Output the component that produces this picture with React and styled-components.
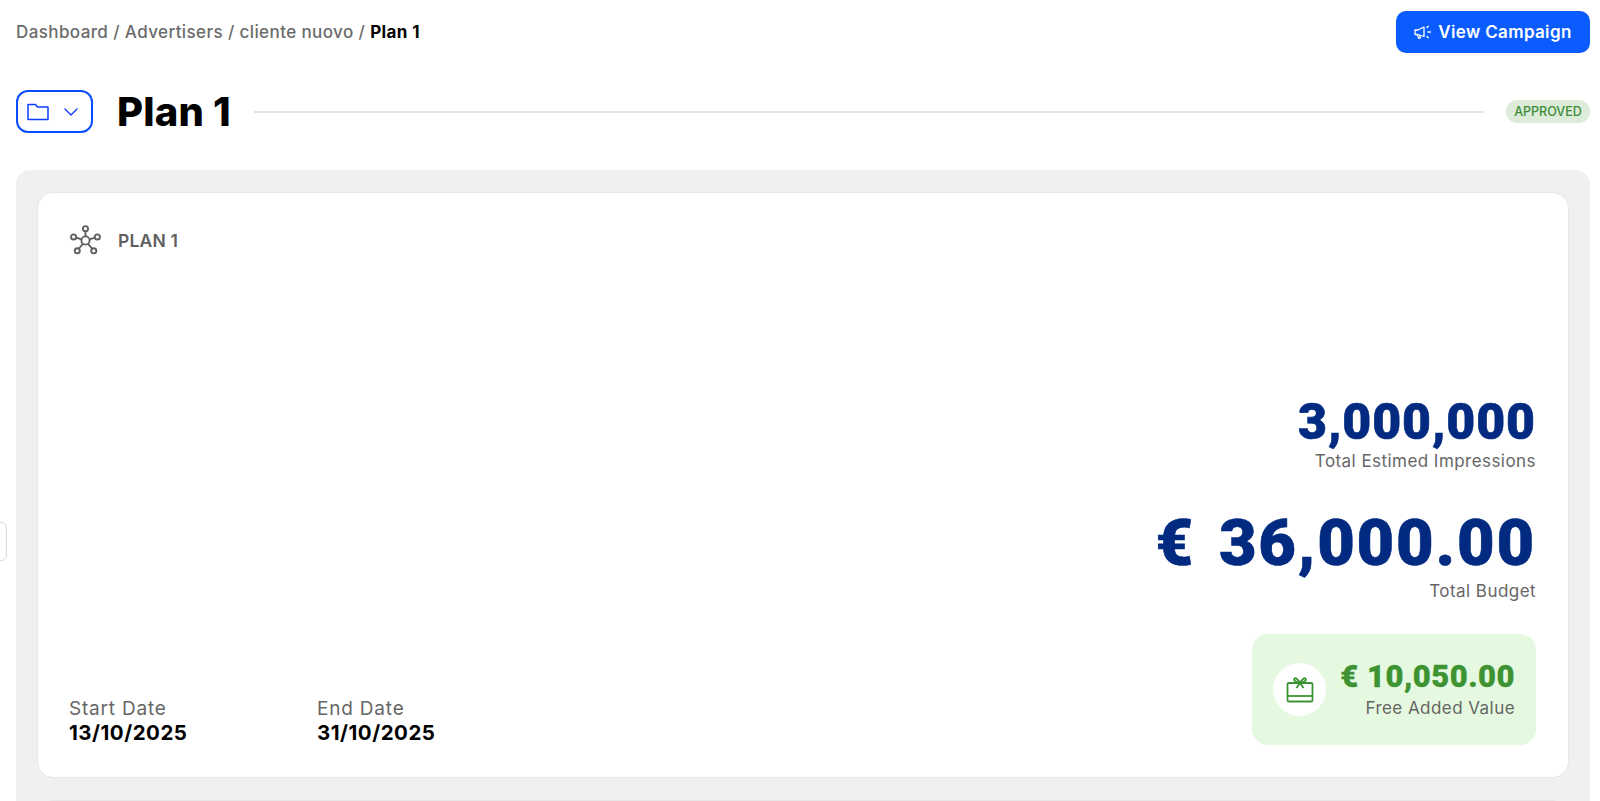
import React from "react";
import styled, { createGlobalStyle } from "styled-components";
import { ChevronDown } from "lucide-react";

const GlobalStyle = createGlobalStyle`
  html, body {
    margin: 0;
    height: 801px;
    overflow: hidden;
    background: #fff;
    font-family: "Inter", "Noto Sans", sans-serif;
  }
`;

const MegaphoneIcon = () => (
  <svg width="18" height="15" viewBox="0 0 18 15" fill="none" stroke="#fff" strokeWidth="1.3" strokeLinejoin="round" strokeLinecap="round">
    <path d="M1 5h3l6-3v9.5L4 9.5H1z" />
    <path d="M3.5 10l1 3h2l-.7-2.4" />
    <path d="M13 2.5l1.2-1.2M14 7h2.4M13 11.5l1.2 1.2" />
  </svg>
);

const FolderIcon = () => (
  <svg width="22" height="18" viewBox="0 0 22 18" fill="none" stroke="currentColor" strokeWidth="1.5" strokeLinejoin="round">
    <path d="M1 1.5h7.5l2 2.5H21v12.5H1z" />
  </svg>
);

const NetworkIcon = () => (
  <svg width="33" height="33" viewBox="0 0 32 32" fill="none" stroke="#5f5f5f" strokeWidth="1.8">
    <circle cx="16" cy="16" r="4" />
    <circle cx="16" cy="4.5" r="2.5" />
    <circle cx="4.5" cy="12.5" r="2.5" />
    <circle cx="27.5" cy="12.5" r="2.5" />
    <circle cx="8" cy="26" r="2.5" />
    <circle cx="24" cy="26" r="2.5" />
    <path d="M16 7v5M7 13.2l5.2 1.6M25 13.2l-5.2 1.6M9.5 24l4-4.8M22.5 24l-4-4.8" />
  </svg>
);

const GiftIcon = () => (
  <svg width="28" height="26" viewBox="0 0 28 26" fill="none" stroke="#3d9232" strokeWidth="1.8" strokeLinejoin="round">
    <rect x="1.5" y="6" width="25" height="18.5" rx="1.2" />
    <path d="M1.5 19h25" />
    <path d="M14 6C12 2 9.5 0.6 8.4 1.6 7.2 2.8 9.5 5.6 14 6zM14 6C16 2 18.5 0.6 19.6 1.6 20.8 2.8 18.5 5.6 14 6z" />
    <path d="M14 6l-3.5 5M14 6l3.5 5" />
  </svg>
);

const Page = styled.div`
  position: relative;
  height: 801px;
  overflow: hidden;
  padding: 11px 10px 0 16px;
  box-sizing: border-box;
`;

const TopBar = styled.header`
  display: flex;
  justify-content: space-between;
  align-items: center;
  height: 42px;
`;

const Crumbs = styled.nav`
  font-size: 17px;
  letter-spacing: 0.4px;
  color: #6b6b6b;
  font-weight: 500;
`;

const CurrentCrumb = styled.span`
  color: #000;
  font-weight: 700;
`;

const CampaignButton = styled.button`
  display: flex;
  align-items: center;
  justify-content: center;
  gap: 6px;
  width: 194px;
  height: 42px;
  border: 0;
  border-radius: 10px;
  background: #0a5cff;
  color: #fff;
  font: 600 17px "Inter", sans-serif;
  letter-spacing: 0.35px;
`;

const TitleRow = styled.div`
  display: flex;
  align-items: center;
  margin-top: 37px;
  height: 43px;
`;

const FolderButton = styled.button`
  display: flex;
  align-items: center;
  justify-content: space-between;
  box-sizing: border-box;
  width: 77px;
  height: 43px;
  padding: 0 8px 0 9px;
  border: 2px solid #0a4dff;
  border-radius: 12px;
  background: #fff;
  color: #0a3dff;
`;

const Title = styled.h1`
  margin: 0 23px 0 24px;
  font-size: 40px;
  line-height: 43px;
  font-weight: 800;
  letter-spacing: 0.2px;
  color: #000;
`;

const Rule = styled.div`
  flex: 1;
  height: 2px;
  background: #e4e4e4;
`;

const StatusBadge = styled.span`
  margin-left: 22px;
  width: 84px;
  height: 23px;
  border-radius: 12px;
  background: #dcecd9;
  color: #3d8b37;
  font-size: 12.5px;
  font-weight: 500;
  line-height: 23px;
  text-align: center;
`;

const Panel = styled.section`
  display: flex;
  flex-direction: column;
  gap: 22px;
  margin-top: 37px;
  padding: 22px 21px 0;
  height: 640px;
  box-sizing: border-box;
  border-radius: 14px 14px 0 0;
  background: #f0f0f0;
`;

const Card = styled.article`
  flex: none;
  display: flex;
  flex-direction: column;
  height: 586px;
  box-sizing: border-box;
  padding: 31px 32px 32px 31px;
  border: 1px solid #e6e6e6;
  border-radius: 16px;
  background: #fff;
`;

const CardHead = styled.div`
  display: flex;
  align-items: center;
  gap: 16px;
  height: 33px;
  color: #5f5f5f;
  font-size: 17.5px;
  font-weight: 600;
  letter-spacing: 0.2px;
`;

const CardBody = styled.div`
  flex: 1;
  display: flex;
  justify-content: space-between;
  align-items: flex-end;
`;

const Dates = styled.div`
  display: flex;
`;

const DateBlock = styled.div`
  width: 248px;
`;

const Label = styled.div`
  color: #666;
  font-size: 17px;
  line-height: 23px;
  letter-spacing: 0.45px;
`;

const DateLabel = styled.div`
  color: #666;
  font-size: 19px;
  line-height: 24px;
  letter-spacing: 0.8px;
`;

const DateValue = styled.div`
  color: #000;
  font-size: 20.5px;
  line-height: 24px;
  font-weight: 700;
  letter-spacing: 0.5px;
`;

const Figures = styled.div`
  display: flex;
  flex-direction: column;
  align-items: flex-end;
`;

const Figure = styled.div`
  color: #012a80;
  font-family: "Roboto", sans-serif;
  font-weight: 900;
  font-size: ${(props) => props.$size}px;
  letter-spacing: ${(props) => props.$spacing}px;
  word-spacing: 6px;
  line-height: 1;
  -webkit-text-stroke: 0.6px currentColor;
`;

const FigureLabel = styled(Label)`
  margin-top: ${(props) => props.$top}px;
  margin-bottom: ${(props) => props.$bottom}px;
`;

const ValueBox = styled.div`
  display: flex;
  align-items: center;
  justify-content: space-between;
  box-sizing: border-box;
  width: 284px;
  height: 111px;
  padding: 0 21px 0 21px;
  border-radius: 16px;
  background: #e5f9e0;
`;

const GiftCircle = styled.div`
  display: flex;
  align-items: center;
  justify-content: center;
  width: 53px;
  height: 53px;
  border-radius: 50%;
  background: #fff;
`;

const ValueText = styled.div`
  text-align: right;
`;

const ValueAmount = styled.div`
  color: #3d9232;
  font-family: "Roboto", sans-serif;
  font-size: 31px;
  font-weight: 900;
  line-height: 34px;
  letter-spacing: 0.5px;
  -webkit-text-stroke: 0.3px currentColor;
  margin-bottom: 3px;
`;

const SideTab = styled.div`
  position: absolute;
  left: -12px;
  top: 522px;
  width: 17px;
  height: 37px;
  border: 1px solid #d8d8d8;
  border-radius: 6px;
  background: #fff;
`;

export default function App() {
  return (
    <>
      <GlobalStyle />
      <Page>
        <TopBar>
          <Crumbs>
            Dashboard / Advertisers / cliente nuovo / <CurrentCrumb>Plan 1</CurrentCrumb>
          </Crumbs>
          <CampaignButton>
            <MegaphoneIcon />
            View Campaign
          </CampaignButton>
        </TopBar>
        <TitleRow>
          <FolderButton>
            <FolderIcon />
            <ChevronDown size={24} strokeWidth={1.4} />
          </FolderButton>
          <Title>Plan 1</Title>
          <Rule />
          <StatusBadge>APPROVED</StatusBadge>
        </TitleRow>
        <Panel>
          <Card>
            <CardHead>
              <NetworkIcon />
              PLAN 1
            </CardHead>
            <CardBody>
              <Dates>
                <DateBlock>
                  <DateLabel>Start Date</DateLabel>
                  <DateValue>13/10/2025</DateValue>
                </DateBlock>
                <DateBlock>
                  <DateLabel>End Date</DateLabel>
                  <DateValue>31/10/2025</DateValue>
                </DateBlock>
              </Dates>
              <Figures>
                <Figure $size={50} $spacing={0.9}>3,000,000</Figure>
                <FigureLabel $top={3} $bottom={38}>Total Estimed Impressions</FigureLabel>
                <Figure $size={65} $spacing={1.8}>€ 36,000.00</Figure>
                <FigureLabel $top={4} $bottom={31}>Total Budget</FigureLabel>
                <ValueBox>
                  <GiftCircle>
                    <GiftIcon />
                  </GiftCircle>
                  <ValueText>
                    <ValueAmount>€ 10,050.00</ValueAmount>
                    <Label>Free Added Value</Label>
                  </ValueText>
                </ValueBox>
              </Figures>
            </CardBody>
          </Card>
          <Card />
        </Panel>
        <SideTab />
      </Page>
    </>
  );
}
